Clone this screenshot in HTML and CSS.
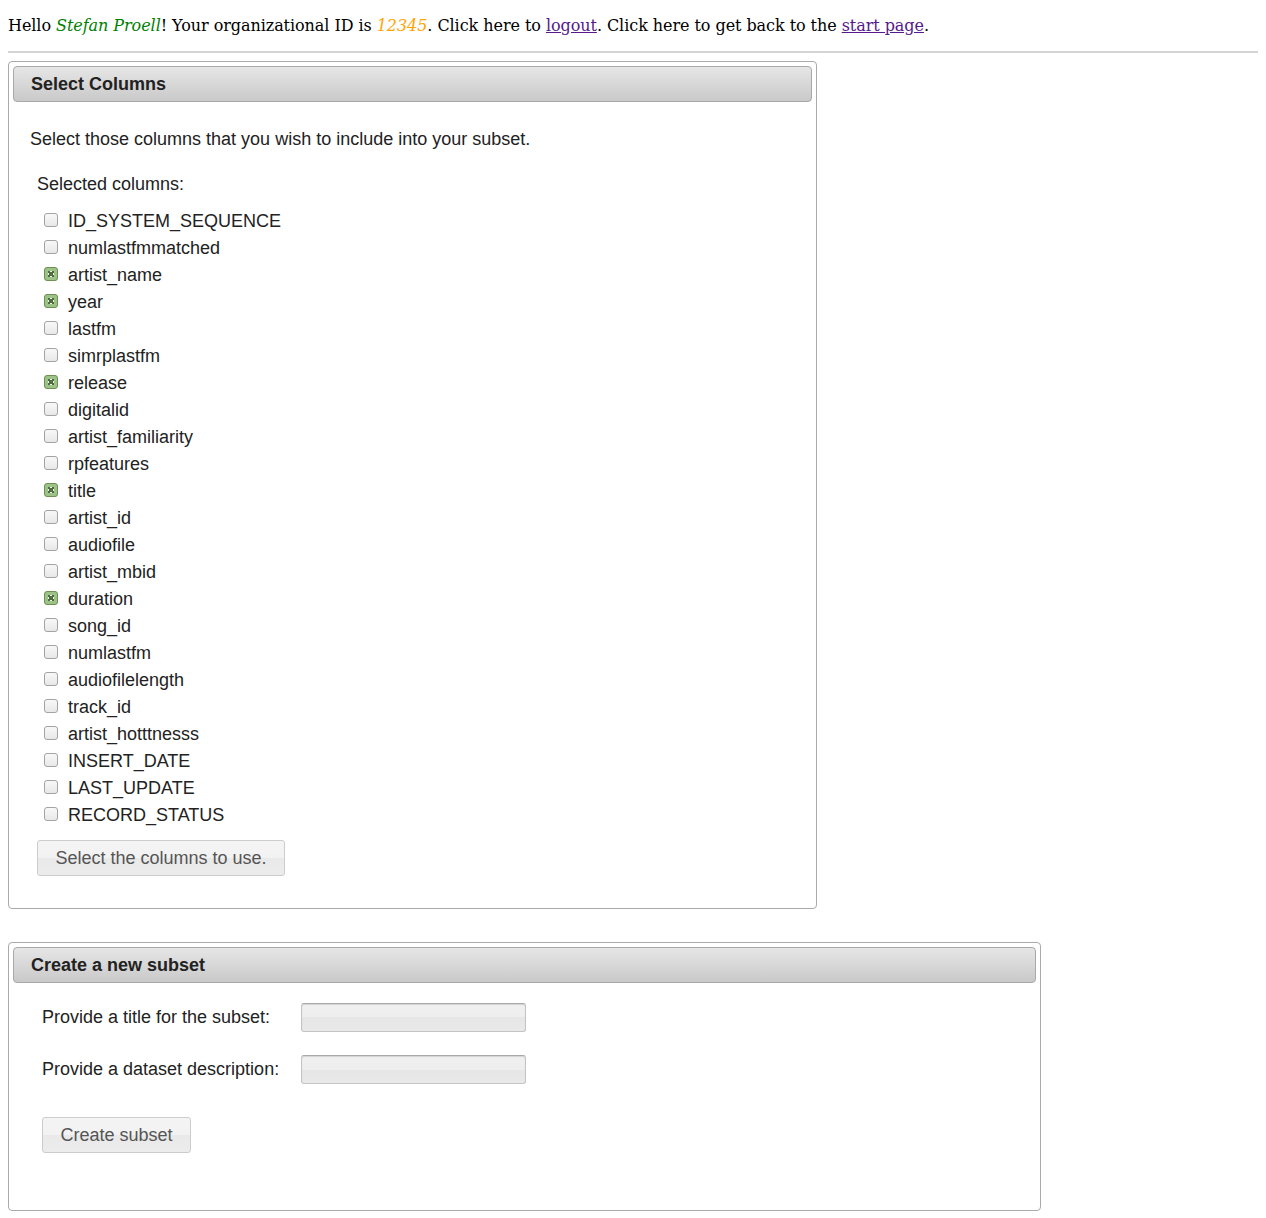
FILE: index.html
```
<!DOCTYPE html>
<html>
<head>
<meta charset="utf-8">
<link rel="stylesheet" href="styles.css">
</head>
<body>
<p class="greeting">Hello <em class="user">Stefan Proell</em>! Your organizational ID is <em class="org">12345</em>. Click here to <a href="#">logout</a>. Click here to get back to the <a href="#">start page</a>.</p>
<hr class="rule">

<div class="panel panel-columns">
  <div class="titlebar">Select Columns</div>
  <div class="content">
    <p class="intro">Select those columns that you wish to include into your subset.</p>
    <div class="selected-label">Selected columns:</div>
    <ul class="cols">
      <li><span class="cb"></span>ID_SYSTEM_SEQUENCE</li>
      <li><span class="cb"></span>numlastfmmatched</li>
      <li><span class="cb on"></span>artist_name</li>
      <li><span class="cb on"></span>year</li>
      <li><span class="cb"></span>lastfm</li>
      <li><span class="cb"></span>simrplastfm</li>
      <li><span class="cb on"></span>release</li>
      <li><span class="cb"></span>digitalid</li>
      <li><span class="cb"></span>artist_familiarity</li>
      <li><span class="cb"></span>rpfeatures</li>
      <li><span class="cb on"></span>title</li>
      <li><span class="cb"></span>artist_id</li>
      <li><span class="cb"></span>audiofile</li>
      <li><span class="cb"></span>artist_mbid</li>
      <li><span class="cb on"></span>duration</li>
      <li><span class="cb"></span>song_id</li>
      <li><span class="cb"></span>numlastfm</li>
      <li><span class="cb"></span>audiofilelength</li>
      <li><span class="cb"></span>track_id</li>
      <li><span class="cb"></span>artist_hotttnesss</li>
      <li><span class="cb"></span>INSERT_DATE</li>
      <li><span class="cb"></span>LAST_UPDATE</li>
      <li><span class="cb"></span>RECORD_STATUS</li>
    </ul>
    <button class="btn btn-select">Select the columns to use.</button>
  </div>
</div>

<div class="panel panel-subset">
  <div class="titlebar">Create a new subset</div>
  <div class="content content-subset">
    <div class="form-grid">
      <label class="flabel">Provide a title for the subset:</label>
      <input class="finput" type="text">
      <label class="flabel">Provide a dataset description:</label>
      <input class="finput" type="text">
    </div>
    <button class="btn btn-create">Create subset</button>
  </div>
</div>
</body>
</html>
```
FILE: styles.css
```
html { margin: 0; padding: 0; }
body {
  margin: 0;
  padding: 16px 8px 8px 8px;
  font-family: "DejaVu Serif", serif;
  font-size: 16px;
  color: #000;
  background: #fff;
}
.greeting {
  margin: 0 0 16px 0;
  line-height: 19px;
  letter-spacing: -0.06px;
}
.user { color: #008000; }
.org { color: #ffa500; }
.greeting a { color: #551a8b; }
.rule {
  border: none;
  border-top: 2px solid #d4d4d4;
  height: 0;
  margin: 0 0 8px 0;
}
.panel {
  box-sizing: border-box;
  border: 1px solid #aaaaaa;
  border-radius: 4px;
  padding: 4px;
  font-family: "Liberation Sans", Arial, sans-serif;
  font-size: 18px;
  color: #222;
}
.panel-columns { width: 809px; }
.panel-subset { width: 1033px; margin-top: 33px; height: 269px; }
.titlebar {
  box-sizing: border-box;
  height: 36px;
  border: 1px solid #a8a8a8;
  border-radius: 4px;
  background: linear-gradient(#e6e6e6, #c9c9c9);
  font-weight: bold;
  line-height: 34px;
  padding-left: 17px;
  color: #222;
}
.content {
  padding: 27px 0 28px 17px;
}
.intro {
  margin: 0;
  line-height: 21px;
}
.selected-label {
  margin: 24px 0 0 7px;
  line-height: 21px;
}
.cols {
  list-style: none;
  margin: 13px 0 0 0;
  padding: 0;
}
.cols li {
  height: 27px;
  line-height: 27px;
  display: flex;
  align-items: center;
  padding-left: 14px;
  color: #222;
}
.cb {
  box-sizing: border-box;
  width: 14px;
  height: 14px;
  border: 1px solid #a3a3a3;
  border-radius: 3px;
  background: linear-gradient(#f8f8f8, #e8e8e8);
  margin-right: 10px;
  margin-top: -3px;
  flex: none;
  position: relative;
}
.cb.on {
  border-color: #6a9152;
  background: #9dc288;
}
.cb.on::after {
  content: "";
  position: absolute;
  left: 3px;
  top: 3px;
  width: 6px;
  height: 6px;
  background:
    linear-gradient(45deg, transparent 38%, #4d6e3c 38%, #4d6e3c 62%, transparent 62%),
    linear-gradient(-45deg, transparent 38%, #4d6e3c 38%, #4d6e3c 62%, transparent 62%),
    #f4f8f1;
}
.btn {
  box-sizing: border-box;
  height: 36px;
  border: 1px solid #cccccc;
  border-radius: 3px;
  background: linear-gradient(#f4f4f4 0%, #f2f2f2 50%, #e9e9e9 50%, #ececec 100%);
  font-family: "Liberation Sans", Arial, sans-serif;
  font-size: 18px;
  color: #555;
  padding: 0;
  white-space: nowrap;
  text-align: center;
  display: block;
}
.btn-select {
  margin: 11px 0 0 7px;
  width: 248px;
}
.content-subset {
  padding: 20px 0 0 29px;
}
.form-grid {
  display: grid;
  grid-template-columns: 250px 225px;
  column-gap: 9px;
  row-gap: 23px;
  align-items: center;
}
.flabel {
  line-height: 21px;
  white-space: nowrap;
  color: #222;
}
.finput {
  box-sizing: border-box;
  width: 225px;
  height: 29px;
  margin: 0;
  border: 1px solid #c4c4c4;
  border-top-color: #a9a9a9;
  border-radius: 3px;
  background: linear-gradient(#f0f0f0 0%, #eeeeee 50%, #e6e6e6 50%, #e9e9e9 100%);
  box-shadow: inset 0 1px 1px rgba(0,0,0,0.12);
}
.btn-create {
  margin-top: 33px;
  width: 149px;
}
```
